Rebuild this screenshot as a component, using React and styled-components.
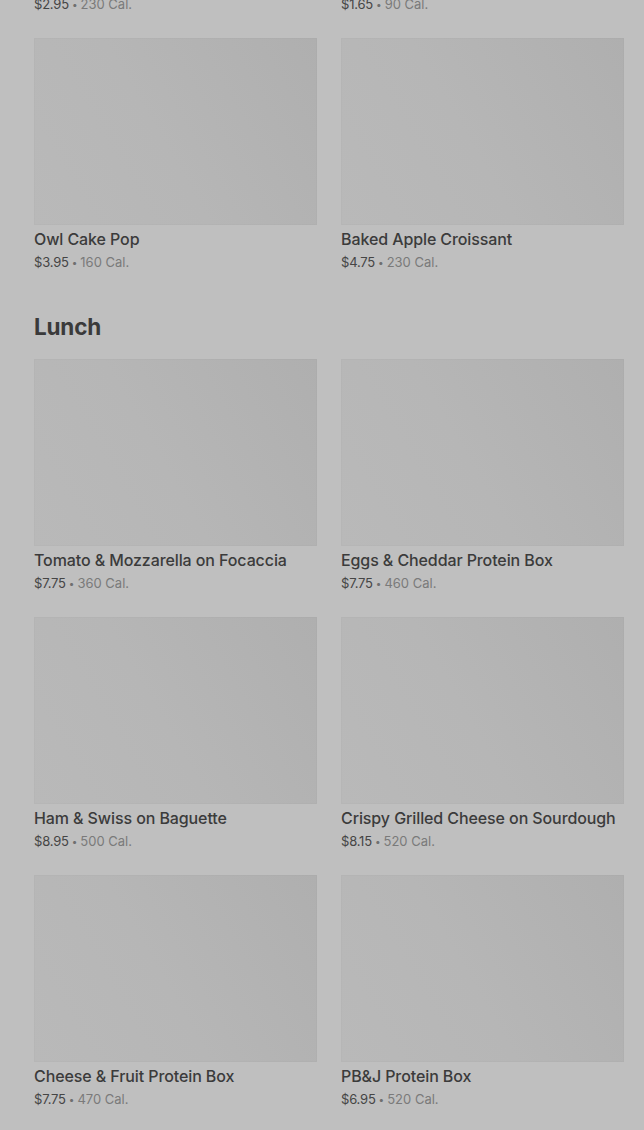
import React from "react";
import styled, { createGlobalStyle } from "styled-components";

const GlobalStyle = createGlobalStyle`
  html, body {
    margin: 0;
    padding: 0;
    background: #bfbfbf;
    font-family: Inter, Roboto, "Liberation Sans", sans-serif;
    overflow: hidden;
  }
`;

const sections = [
  {
    title: null,
    items: [
      { name: "Butter Croissant", price: "$2.95", cal: "230 Cal." },
      { name: "Madeleine Cookies", price: "$1.65", cal: "90 Cal." },
      { name: "Owl Cake Pop", price: "$3.95", cal: "160 Cal." },
      { name: "Baked Apple Croissant", price: "$4.75", cal: "230 Cal." },
    ],
  },
  {
    title: "Lunch",
    items: [
      { name: "Tomato & Mozzarella on Focaccia", price: "$7.75", cal: "360 Cal." },
      { name: "Eggs & Cheddar Protein Box", price: "$7.75", cal: "460 Cal." },
      { name: "Ham & Swiss on Baguette", price: "$8.95", cal: "500 Cal." },
      { name: "Crispy Grilled Cheese on Sourdough", price: "$8.15", cal: "520 Cal." },
      { name: "Cheese & Fruit Protein Box", price: "$7.75", cal: "470 Cal." },
      { name: "PB&J Protein Box", price: "$6.95", cal: "520 Cal." },
    ],
  },
];

const App = () => {
  return (
    <>
      <GlobalStyle />
      <Page>
        {sections.map((section, i) => (
          <Section key={i}>
            {section.title && <Heading>{section.title}</Heading>}
            <Grid>
              {section.items.map((item) => (
                <Card key={item.name}>
                  <Thumb />
                  <Name>{item.name}</Name>
                  <Meta>
                    <Price>{item.price}</Price>
                    <Dot>•</Dot>
                    <Cal>{item.cal}</Cal>
                  </Meta>
                </Card>
              ))}
            </Grid>
          </Section>
        ))}
      </Page>
    </>
  );
};

const Page = styled.div`
  margin-top: -220px;
  padding: 0 20px 40px 34px;
  display: flex;
  flex-direction: column;
  gap: 42px;
`;

const Section = styled.section`
  display: flex;
  flex-direction: column;
`;

const Heading = styled.h2`
  margin: 0 0 18px;
  font-size: 22.5px;
  line-height: 28px;
  font-weight: 700;
  letter-spacing: -0.2px;
  color: #3a3a3a;
`;

const Grid = styled.div`
  display: grid;
  grid-template-columns: 283px 283px;
  column-gap: 24px;
  row-gap: 25px;
`;

const Card = styled.div`
  display: flex;
  flex-direction: column;
`;

const Thumb = styled.div`
  height: 187px;
  background: linear-gradient(60deg, #b9b9b9 0%, #b6b6b6 45%, #afafaf 100%);
  box-shadow: inset 0 0 0 1px rgba(0, 0, 0, 0.015);
`;

const Name = styled.div`
  margin-top: 4px;
  font-size: 16px;
  line-height: 21px;
  font-weight: 500;
  letter-spacing: -0.1px;
  color: #3b3b3b;
  white-space: nowrap;
`;

const Meta = styled.div`
  margin-top: 3px;
  font-size: 13px;
  line-height: 18px;
  display: flex;
  align-items: center;
  gap: 3px;
`;

const Price = styled.span`
  color: #454545;
  letter-spacing: -0.2px;
`;

const Dot = styled.span`
  color: #6f6f6f;
  font-size: 10px;
`;

const Cal = styled.span`
  color: #7a7a7a;
`;

export default App;
